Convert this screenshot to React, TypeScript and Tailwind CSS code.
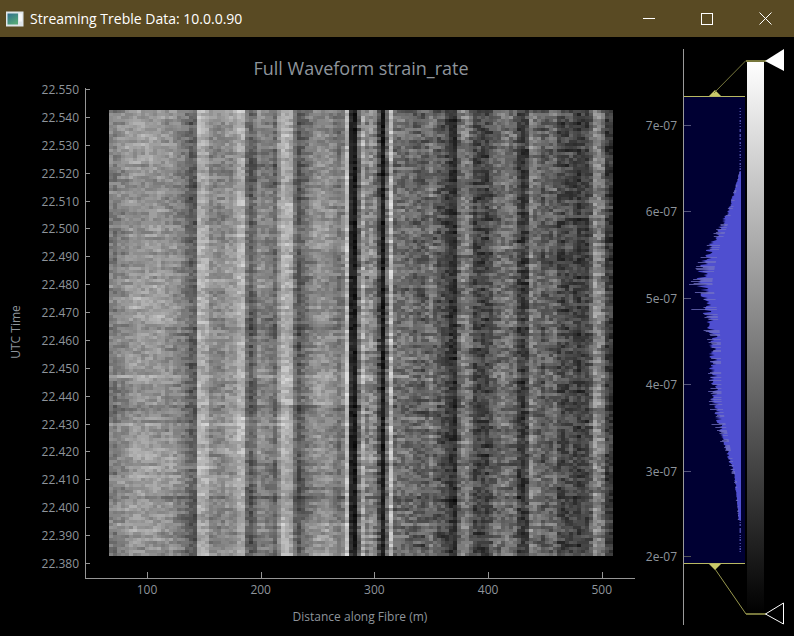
const mulberry = (seed: number) => () => {
    seed = (seed + 0x6d2b79f5) | 0;
    let t = Math.imul(seed ^ (seed >>> 15), 1 | seed);
    t = (t + Math.imul(t ^ (t >>> 7), 61 | t)) ^ t;
    return ((t ^ (t >>> 14)) >>> 0) / 4294967296;
};

const lerpTable = (table: number[][], at: number) => {
    for (let i = 1; i < table.length; i++) {
        if (at <= table[i][0]) {
            const [x0, v0] = table[i - 1];
            const [x1, v1] = table[i];
            return v0 + ((v1 - v0) * (at - x0)) / (x1 - x0);
        }
    }
    return table[table.length - 1][1];
};

// gray level of each fibre position, read off the picture
const PROFILE = [
    [109, 160], [112, 120], [118, 130], [130, 148], [150, 158], [165, 150], [180, 135], [188, 115], [191, 92], [196, 98],
    [199, 178], [206, 172], [211, 130], [225, 145], [235, 150], [240, 175], [245, 180], [248, 88], [254, 88], [258, 145],
    [268, 125], [276, 105], [282, 175], [291, 172], [295, 118], [299, 90], [310, 125], [320, 145], [332, 135], [340, 118],
    [344, 135], [347, 180], [350, 50], [352, 26], [358, 26], [360, 170], [363, 165], [366, 135], [372, 135], [378, 125],
    [380, 28], [386, 30], [388, 185], [393, 178], [395, 105], [410, 108], [425, 98], [431, 125], [437, 90], [445, 78],
    [450, 48], [456, 48], [460, 115], [465, 132], [470, 120], [473, 72], [487, 72], [495, 105], [505, 118], [515, 105],
    [520, 62], [526, 58], [530, 125], [536, 120], [542, 90], [550, 105], [556, 98], [561, 72], [570, 78], [580, 62],
    [590, 68], [593, 138], [602, 132], [605, 66], [612, 60],
];

const buildHeatmap = () => {
    const rand = mulberry(42);
    const levels: string[] = Array.from({ length: 40 }, () => "");
    const rows = 148;
    const cols = 126;
    const rowShift = Array.from({ length: rows }, () => (rand() - 0.5) * 16);
    const colShift = Array.from({ length: cols }, () => (rand() - 0.5) * 14);
    [98, 99, 100, 72, 20, 128].forEach((r) => (rowShift[r] -= 16));
    [30, 62, 88, 104].forEach((r) => (rowShift[r] += 12));
    for (let r = 0; r < rows; r++) {
        const top = Math.round(110 + r * 3.0135);
        const height = Math.round(110 + (r + 1) * 3.0135) - top;
        let carry = 0;
        for (let c = 0; c < cols; c++) {
            const x = 109 + c * 4;
            const base = lerpTable(PROFILE, x + 2);
            const amp = x < 350 ? 42 : 62;
            // dark fibre sections stay dark, so the noise shrinks with the level
            const damp = Math.min(1, 0.3 + base / 120);
            carry = carry * 0.35 + (rand() - 0.5) * amp;
            const wave = x < 350 ? Math.sin(r / 9 + c / 14) * 7 + Math.sin(r / 4 - c / 6) * 5 : 0;
            const noise = (rowShift[r] * (x < 350 ? 1 : 0.7) + colShift[c] + carry + wave) * damp;
            const gray = Math.max(8, Math.min(225, base + noise));
            const level = Math.min(39, Math.floor(gray / 6));
            levels[level] += `M${x} ${top}h4v${height}h-4z`;
        }
    }
    return levels;
};

const HEAT_LEVELS = buildHeatmap();

const ENVELOPE = [
    [108, 740], [170, 740], [185, 736], [205, 731], [230, 720], [245, 712], [265, 705], [282, 701], [300, 706], [340, 713],
    [400, 714], [425, 720], [450, 727], [480, 735], [510, 738], [552, 740],
];

const buildHistogram = () => {
    const rand = mulberry(7);
    let body = "M741 172";
    let spikes = "";
    let tail = "";
    for (let y = 172; y <= 520; y++) {
        const edge = lerpTable(ENVELOPE, y);
        const width = 741 - edge;
        body += `L${(edge - rand() * width * 0.34 + width * 0.17).toFixed(1)} ${y}`;
        if (rand() < 0.4) {
            const reach = Math.max(689, edge - rand() * width * (rand() < 0.1 ? 0.5 : 0.26));
            spikes += `M${reach.toFixed(1)} ${y + 0.5}H${(edge + width * 0.28).toFixed(1)}`;
        }
    }
    body += "L741 520Z";
    for (let y = 108; y < 172; y += 1 + Math.floor(rand() * 3)) tail += `M739.5 ${y}h1.5v1h-1.5z`;
    for (let y = 520; y < 552; y += 1 + Math.floor(rand() * 3)) tail += `M739.5 ${y}h1.5v1h-1.5z`;
    return { body, spikes, tail };
};

const HISTOGRAM = buildHistogram();

const Y_TICKS = ["22.550", "22.540", "22.530", "22.520", "22.510", "22.500", "22.490", "22.480", "22.470", "22.460", "22.450", "22.440", "22.430", "22.420", "22.410", "22.400", "22.390", "22.380"];
const X_TICKS = ["100", "200", "300", "400", "500"];
const LEVEL_TICKS = [
    { label: "7e-07", y: 125 },
    { label: "6e-07", y: 211 },
    { label: "5e-07", y: 298 },
    { label: "4e-07", y: 384 },
    { label: "3e-07", y: 471 },
    { label: "2e-07", y: 556 },
];

const TitleBar = () => (
    <header className="flex h-[37px] items-center bg-[#594a23] text-white">
        <svg width="18" height="16" viewBox="0 0 18 16" className="ml-[6px]">
            <defs>
                <linearGradient id="appIcon" x1="0" y1="0" x2="0.6" y2="1">
                    <stop offset="0" stopColor="#2f6f8f" />
                    <stop offset="1" stopColor="#55a877" />
                </linearGradient>
            </defs>
            <rect x="0" y="0.5" width="17.5" height="15" fill="#dfe6ea" />
            <rect x="1.5" y="2.5" width="10.5" height="11" fill="url(#appIcon)" />
            <rect x="13" y="2.5" width="3" height="8" fill="#f5f7f7" />
        </svg>
        <span className="ml-[6px] font-['Open_Sans',sans-serif] text-[14px]">Streaming Treble Data: 10.0.0.90</span>
        <div className="ml-auto flex items-center">
            <button className="flex h-[37px] w-[58px] items-center justify-center">
                <span className="block h-px w-[12px] bg-white" />
            </button>
            <button className="flex h-[37px] w-[58px] items-center justify-center">
                <span className="block h-[12px] w-[12px] border border-white" />
            </button>
            <button className="flex h-[37px] w-[58px] items-center justify-center">
                <svg width="13" height="13" viewBox="0 0 13 13" stroke="white" strokeWidth="1">
                    <path d="M0.5 0.5L12.5 12.5M12.5 0.5L0.5 12.5" />
                </svg>
            </button>
        </div>
    </header>
);

const WaveformPlot = () => (
    <svg width="640" height="556" viewBox="0 80 640 556" className="block font-['Open_Sans',sans-serif]">
        <g shapeRendering="crispEdges">
            {HEAT_LEVELS.map((d, i) => {
                const v = i * 6 + 3;
                return d ? <path key={i} d={d} fill={`rgb(${v},${v},${v})`} /> : null;
            })}
        </g>
        <g stroke="#969696" shapeRendering="crispEdges">
            <path d="M85.5 88V578.5H635" fill="none" />
            {Y_TICKS.map((_, i) => (
                <path key={i} d={`M85 ${(89 + i * 27.88).toFixed(0)}.5h5`} />
            ))}
            {X_TICKS.map((_, i) => (
                <path key={i} d={`M${(147 + i * 113.7).toFixed(0)}.5 572v6`} />
            ))}
        </g>
        <g fill="#8e949b" fontSize="12">
            {Y_TICKS.map((label, i) => (
                <text key={label} x="79" y={94 + i * 27.88} textAnchor="end">{label}</text>
            ))}
            {X_TICKS.map((label, i) => (
                <text key={label} x={147 + i * 113.7} y="594" textAnchor="middle">{label}</text>
            ))}
            <text x="360" y="621" textAnchor="middle">Distance along Fibre (m)</text>
            <text x="0" y="0" textAnchor="middle" transform="translate(20 332) rotate(-90)">UTC Time</text>
        </g>
    </svg>
);

const LevelsPanel = () => (
    <svg width="154" height="599" viewBox="640 37 154 599" className="block font-['Open_Sans',sans-serif]">
        <defs>
            <linearGradient id="levelRamp" x1="0" y1="0" x2="0" y2="1">
                <stop offset="0" stopColor="#ffffff" />
                <stop offset="1" stopColor="#000000" />
            </linearGradient>
        </defs>
        <rect x="684" y="97" width="61" height="466" fill="#000033" />
        <path d={HISTOGRAM.body} fill="#4f4fd0" />
        <path d={HISTOGRAM.spikes} stroke="#7272c4" strokeWidth="1" fill="none" opacity="0.75" />
        <path d={HISTOGRAM.tail} fill="#5f5fc8" opacity="0.75" />
        <rect x="747" y="61" width="17" height="553" fill="url(#levelRamp)" />
        <g shapeRendering="crispEdges">
            {LEVEL_TICKS.map((tick) => (
                <path key={tick.y} d={`M684 ${tick.y}.5h7`} stroke={tick.y === 556 ? "#555" : "#55557a"} />
            ))}
        </g>
        <path d="M683.5 49V625" stroke="#9a9a9a" shapeRendering="crispEdges" />
        <g fill="#8e949b" fontSize="12">
            {LEVEL_TICKS.map((tick) => (
                <text key={tick.label} x="677" y={tick.y + 5} textAnchor="end">{tick.label}</text>
            ))}
        </g>
        <g stroke="#b9b962" strokeWidth="1" shapeRendering="crispEdges">
            <path d="M684 96.5H745" />
            <path d="M684 563.5H745" />
        </g>
        <path d="M709 96L715 90L721 96Z" fill="#c8c86a" />
        <path d="M709 564L715 570L721 564Z" fill="#c8c86a" />
        <path d="M714 93L746 60.5" stroke="#77773c" fill="none" />
        <path d="M715 569L746 614" stroke="#98984e" fill="none" />
        <rect x="746" y="60" width="20" height="2" fill="#77773c" />
        <rect x="746" y="613" width="20" height="2" fill="#77773c" />
        <path d="M765 61L784 49V71Z" fill="#ffffff" />
        <path d="M765.5 614L783.5 603V624Z" fill="#000000" stroke="#ffffff" />
    </svg>
);

export default function App() {
    return (
        <div className="flex h-[636px] w-[794px] flex-col overflow-hidden bg-black">
            <TitleBar />
            <main className="flex flex-1">
                <section className="w-[640px]">
                    <h1 className="flex h-[43px] items-center justify-center pl-[82px] pt-[19px] font-['Open_Sans',sans-serif] text-[18px] font-normal text-[#8e949b]">
                        Full Waveform strain_rate
                    </h1>
                    <WaveformPlot />
                </section>
                <LevelsPanel />
            </main>
        </div>
    );
}
